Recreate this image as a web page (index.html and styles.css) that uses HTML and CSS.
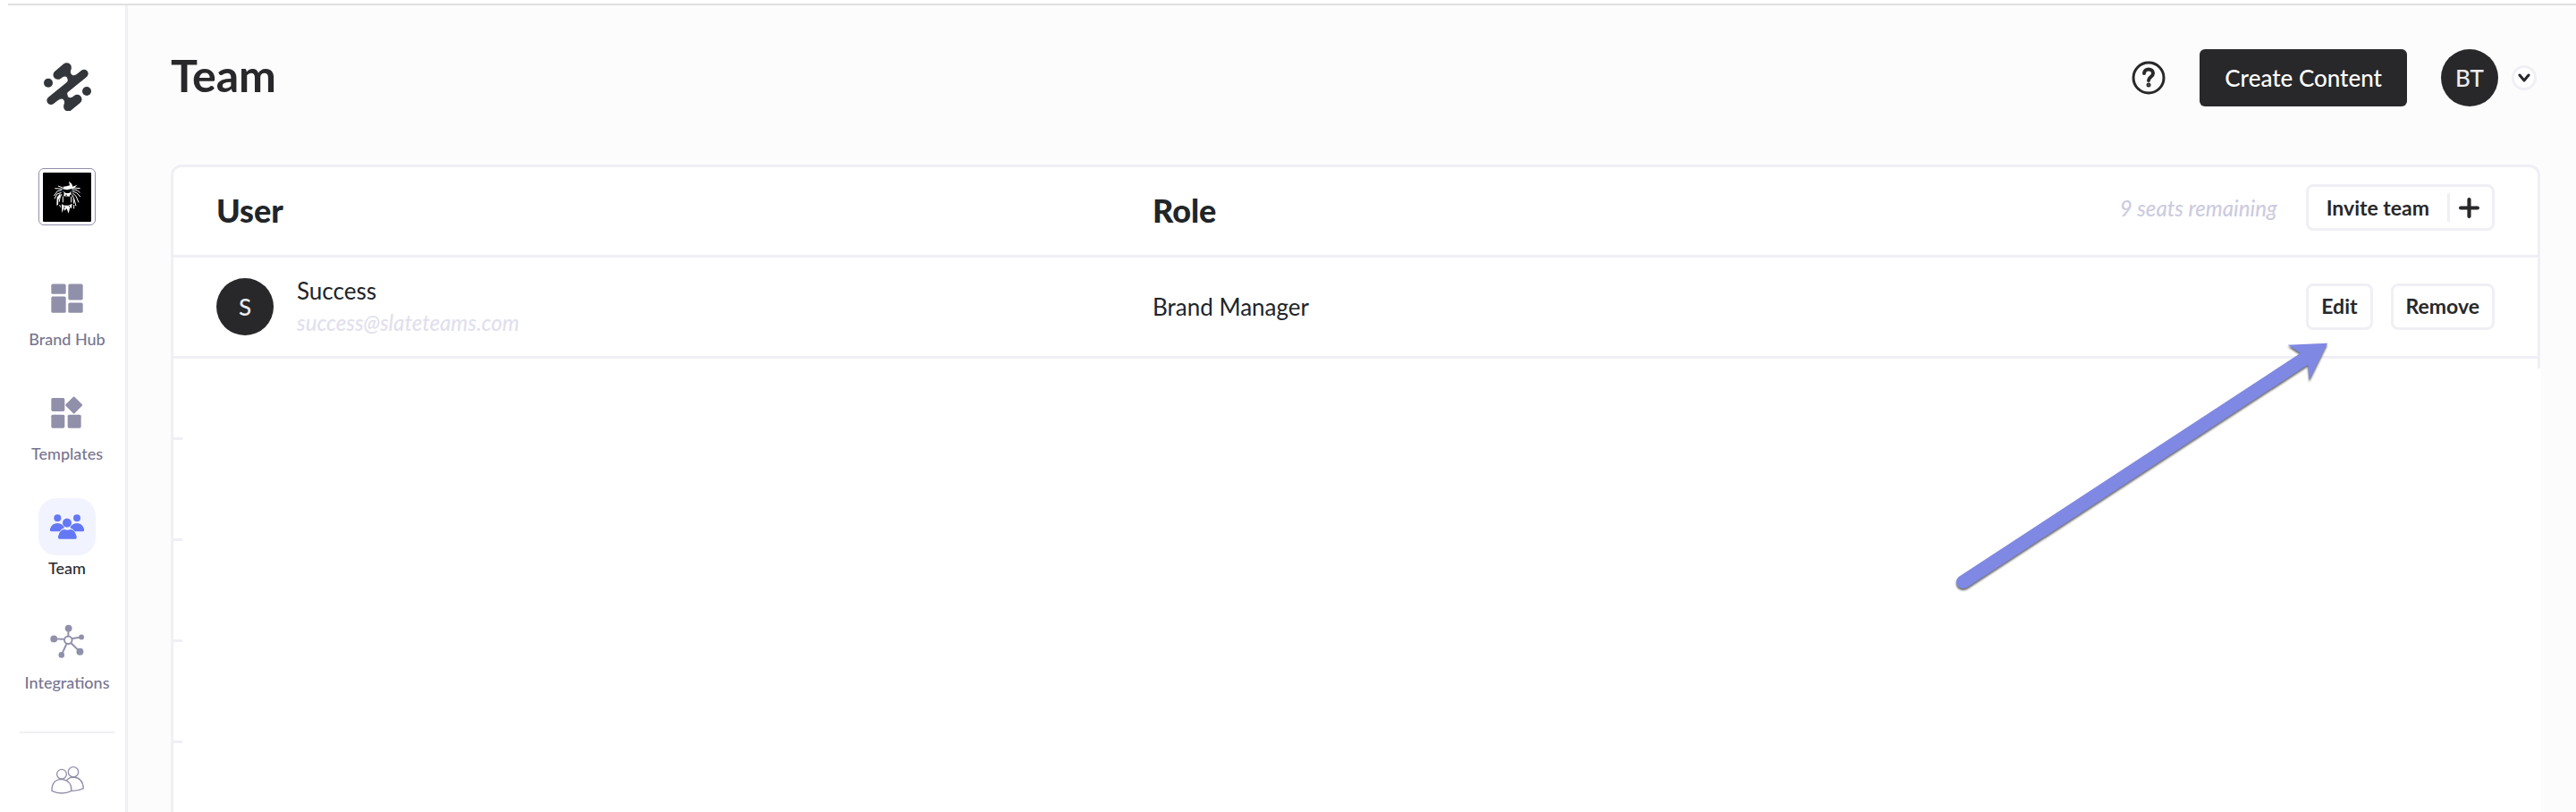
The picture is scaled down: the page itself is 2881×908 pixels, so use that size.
FILE: index.html
```
<!DOCTYPE html>
<html lang="en">
<head>
    <meta charset="UTF-8">
    <meta name="viewport" content="width=device-width, initial-scale=1.0">
    <title>Team</title>
    <link rel="stylesheet" href="styles.css">
</head>
<body>

<div class="top-strip"></div>

<div class="app">
    <!-- Sidebar -->
    <aside class="sidebar">
        <a href="#" class="logo" aria-label="Home">
            <svg width="53" height="54" viewBox="144 210 159 162">
                <g stroke="#33363b" stroke-linecap="round" fill="none">
                    <path stroke-width="28" d="M279 247L168 337"/>
                    <path stroke-width="31" d="M221 226L191 251M226 358L256 333"/>
                </g>
                <g fill="#33363b">
                    <path d="M237 228Q229 246 240 252Q247 255 258 245L212 292Q230 275 222 260Q215 250 196 266Z"/>
                    <path d="M210 356Q218 338 207 332Q200 329 189 339L235 292Q217 309 225 324Q232 334 251 318Z"/>
                    <circle cx="159" cy="278" r="15"/>
                    <circle cx="288" cy="306" r="15"/>
                </g>
            </svg>
        </a>

        <button class="brand-switch" aria-label="Switch brand">
            <svg width="54" height="55" viewBox="141 576 162 165">
                <rect x="141" y="576" width="162" height="165" rx="3" fill="#000"/>
                <g fill="#fff">
                    <path d="M228 605L238 614L241 623L256 617L248 626L238 630L222 634L206 631L212 626L208 623L220 622L231 619Z"/>
                    <path d="M211 640L218 645L229 645L235 640L236 650L231 650L231 656L210 655L212 649Z"/>
                    <path d="M204 681L212 686L227 686L239 680L237 697L232 692L227 713L221 697L213 704L212 694L205 711Z"/>
                    <path d="M199 646L188 659L187 686L192 684L193 667L200 655Z"/>
                </g>
                <g fill="none" stroke="#fff" stroke-width="3">
                    <path d="M210 628L192 621M206 631L181 629M204 635L190 638L178 654M203 643L188 648L180 664M204 648L198 660L196 674M208 656V676"/>
                    <path d="M240 627L266 629M238 632L256 635L265 644M240 638L254 644L267 657M240 644L252 655L261 676M239 650L246 666L252 688M236 656V676M243 664L245 680"/>
                    <path d="M245 684V697M197 684L200 692"/>
                </g>
                <path d="M213 660H230V670H213ZM216 676H229V683H216ZM217 650H222V653H217ZM211 690H215V694H211ZM228 688H231V691H228Z" fill="#000"/>
                <path d="M206 636L215 640L207 641ZM232 640L239 635L238 641Z" fill="#21738a"/>
            </svg>
        </button>

        <nav class="side-nav">
            <a href="#" class="nav-item">
                <span class="nav-icon">
                    <svg width="36" height="33" viewBox="172 80 108 98" fill="#9190ab">
                        <rect x="173" y="81" width="49" height="34" rx="5"/>
                        <rect x="173" y="123" width="49" height="55" rx="5"/>
                        <rect x="230" y="81" width="49" height="54" rx="5"/>
                        <rect x="230" y="144" width="49" height="34" rx="5"/>
                    </svg>
                </span>
                <span>Brand Hub</span>
            </a>
            <a href="#" class="nav-item">
                <span class="nav-icon">
                    <svg width="36" height="36" viewBox="172 460 108 108" fill="#9190ab">
                        <rect x="173" y="466" width="45" height="45" rx="5"/>
                        <rect x="173" y="522" width="45" height="45" rx="5"/>
                        <rect x="228" y="522" width="45" height="45" rx="5"/>
                        <rect x="228" y="469" width="42" height="42" rx="3" transform="rotate(45 249 490)"/>
                    </svg>
                </span>
                <span>Templates</span>
            </a>
            <a href="#" class="nav-item active">
                <span class="nav-icon">
                    <svg width="38" height="28" viewBox="168 134 114 84" fill="#6478f6">
                        <circle cx="193" cy="147" r="12"/>
                        <circle cx="258" cy="147" r="12"/>
                        <circle cx="225" cy="163" r="15"/>
                        <path d="M168 183Q175 164 193 164Q210 165 216 180Q206 183 200 192H172Q168 192 168 188Z"/>
                        <path d="M282 183Q275 164 258 164Q241 165 235 180Q245 183 251 192H278Q282 192 282 188Z"/>
                        <path d="M195 208Q201 185 216 185Q226 189 236 185Q251 186 257 208V213Q257 217 253 217H199Q195 217 195 213Z"/>
                    </svg>
                </span>
                <span>Team</span>
            </a>
            <a href="#" class="nav-item">
                <span class="nav-icon">
                    <svg width="38" height="38" viewBox="168 503 114 116">
                        <g stroke="#9190ab" stroke-width="6" fill="none">
                            <circle cx="229" cy="557" r="13"/>
                            <path d="M230 517L229 543M180 553L215 554M274 547L243 552M269 597L239 568M206 608L223 571"/>
                        </g>
                        <g fill="#9190ab">
                            <circle cx="230" cy="517" r="12"/>
                            <circle cx="180" cy="553" r="12"/>
                            <circle cx="274" cy="547" r="9"/>
                            <circle cx="269" cy="597" r="12"/>
                            <circle cx="206" cy="608" r="10"/>
                        </g>
                    </svg>
                </span>
                <span>Integrations</span>
            </a>
        </nav>

        <hr class="side-line">

        <a href="#" class="nav-icon" aria-label="Members">
            <svg width="37" height="31" viewBox="170 978 111 93" fill="none" stroke="#9190ab" stroke-width="4">
                <circle cx="206" cy="1004" r="16"/>
                <circle cx="245" cy="997" r="17"/>
                <path d="M173 1060Q172 1022 206 1021Q239 1024 239 1060Q206 1076 173 1060Z"/>
                <path d="M222 1025Q232 1014 245 1014Q277 1016 279 1052Q260 1061 239 1060"/>
            </svg>
        </a>
    </aside>

    <!-- Main content -->
    <main class="main">
        <header class="page-header">
            <h1>Team</h1>
            <div class="header-actions">
                <button class="help-btn" aria-label="Help">
                    <svg width="38" height="38" viewBox="0 0 38 38" fill="none" stroke="#28282a" stroke-linecap="round">
                        <circle cx="19" cy="19" r="17" stroke-width="3"/>
                        <path stroke-width="4" d="M14 14C14 8 24 8 24 14C24 18 19 18 19 22"/>
                        <circle cx="19" cy="27" r="1" stroke-width="3"/>
                    </svg>
                </button>
                <button class="create-btn">Create Content</button>
                <div class="account">
                    <span class="avatar">BT</span>
                    <button class="account-toggle" aria-label="Account menu">
                        <svg width="14" height="10" viewBox="0 0 14 10" fill="none" stroke="#28282a" stroke-width="3" stroke-linecap="round" stroke-linejoin="round">
                            <path d="M2 2L7 8L12 2"/>
                        </svg>
                    </button>
                </div>
            </div>
        </header>

        <section class="panel">
            <table class="team-table">
                <thead>
                    <tr>
                        <th class="user-col">User</th>
                        <th class="role-col">Role</th>
                        <th class="actions-col">
                            <div class="row-actions invite-actions">
                                <span class="seats">9 seats remaining</span>
                                <button class="outline-btn invite-btn">
                                    <span>Invite team</span>
                                    <span class="invite-plus">
                                        <svg width="23" height="23" viewBox="0 0 22 22" stroke="#28282a" stroke-width="4" stroke-linecap="round">
                                            <path d="M11 2V20M2 11H20"/>
                                        </svg>
                                    </span>
                                </button>
                            </div>
                        </th>
                    </tr>
                </thead>
                <tbody>
                    <tr>
                        <td>
                            <div class="user">
                                <span class="avatar">S</span>
                                <div>
                                    <div class="user-name">Success</div>
                                    <div class="user-email">success@slateteams.com</div>
                                </div>
                            </div>
                        </td>
                        <td class="role">Brand Manager</td>
                        <td>
                            <div class="row-actions">
                                <button class="outline-btn">Edit</button>
                                <button class="outline-btn">Remove</button>
                            </div>
                        </td>
                    </tr>
                </tbody>
            </table>
            <div class="blank-row short"></div>
            <div class="blank-row"></div>
            <div class="blank-row"></div>
            <div class="blank-row"></div>

            <div class="cover"></div>

            <!-- Arrow to the Edit button -->
            <svg class="arrow" width="480" height="300" viewBox="0 0 1440 900">
                <path fill="#7f88e3" d="M92 825L1238 75L1196 47L1329 41L1268 166L1263 114L120 861C96 873 70 848 92 825Z"/>
            </svg>
        </section>
    </main>
</div>

</body>
</html>
```

FILE: styles.css
```
* {
    box-sizing: border-box;
}

body {
    margin: 0;
    height: 100vh;
    overflow: hidden;
    display: flex;
    flex-direction: column;
    font-family: Lato, 'Open Sans', sans-serif;
    color: #212529;
    background: #fff;
}

button {
    font-family: inherit;
    padding: 0;
    border: none;
    background: none;
    cursor: pointer;
}

svg {
    display: block;
    flex-shrink: 0;
}

.top-strip {
    flex-shrink: 0;
    height: 6px;
    margin-left: 9px;
    border-bottom: 2px solid #e0e0e0;
}

.app {
    flex: 1;
    min-height: 0;
    display: flex;
}

/* Sidebar */
.sidebar {
    flex-shrink: 0;
    width: 143px;
    padding: 64px 0 0 10px;
    border-right: 3px solid #f0eff5;
    display: flex;
    flex-direction: column;
    align-items: center;
}

.brand-switch {
    width: 64px;
    height: 64px;
    margin: 64px 0 49px;
    border: 1px solid #9190ab;
    border-radius: 6px;
    display: flex;
    align-items: center;
    justify-content: center;
}

.side-nav {
    display: flex;
    flex-direction: column;
    align-items: center;
    gap: 36px;
}

.nav-item {
    display: flex;
    flex-direction: column;
    align-items: center;
    font-size: 18px;
    line-height: 28px;
    font-weight: 500;
    color: #77758f;
    text-decoration: none;
}

.nav-icon {
    width: 64px;
    height: 64px;
    border-radius: 20px;
    display: flex;
    align-items: center;
    justify-content: center;
}

.nav-item.active {
    color: #28282a;
}

.nav-item.active .nav-icon {
    background: #f1f4fe;
}

.side-line {
    width: 106px;
    margin: 41px 0 20px;
    border: none;
    border-top: 2px solid #f0eff5;
}

/* Main content */
.main {
    flex: 1;
    min-width: 0;
    padding: 49px 40px 0 48px;
    background: #fcfcfc;
    display: flex;
    flex-direction: column;
}

.page-header {
    display: flex;
    justify-content: space-between;
    padding-right: 4px;
    margin-bottom: 65px;
}

.page-header h1 {
    margin: 0;
    font-size: 50px;
    line-height: 58px;
    color: #28282a;
}

.header-actions {
    display: flex;
    align-items: center;
    gap: 38px;
}

.create-btn {
    height: 64px;
    padding: 0 28px;
    border-radius: 6px;
    background: #28282a;
    color: #fff;
    font-size: 26px;
    font-weight: 500;
}

.account {
    display: flex;
    align-items: center;
    gap: 15px;
}

.avatar {
    flex-shrink: 0;
    width: 64px;
    height: 64px;
    border-radius: 50%;
    background: #28282a;
    color: #ececf0;
    font-size: 26px;
    font-weight: 500;
    display: flex;
    align-items: center;
    justify-content: center;
}

.account-toggle {
    width: 28px;
    height: 28px;
    border: 3px solid #f0eff5;
    border-radius: 50%;
    background: #fff;
    display: flex;
    align-items: center;
    justify-content: center;
}

/* Team table */
.panel {
    position: relative;
    flex: 1;
    border: 3px solid #f0eff5;
    border-bottom: none;
    border-radius: 12px 12px 0 0;
    background: #fff;
}

.team-table {
    width: 100%;
    table-layout: fixed;
    border-collapse: separate;
    border-spacing: 0;
}

.team-table th,
.team-table td {
    padding: 0 0 0 48px;
    text-align: left;
    border-bottom: 3px solid #f0eff5;
}

.team-table th {
    height: 101px;
    padding-bottom: 2px;
    font-size: 36px;
    font-weight: 900;
}

.team-table td {
    height: 113px;
}

.user-col {
    width: 39.6%;
}

.role-col {
    width: 30%;
}

.user {
    display: flex;
    align-items: center;
    gap: 26px;
}

.user-name,
.role {
    font-size: 26px;
    line-height: 36px;
}

.user-email {
    font-size: 24px;
    line-height: 36px;
    font-weight: 500;
    font-style: italic;
    color: #e1e0ed;
}

.row-actions {
    display: flex;
    align-items: center;
    justify-content: flex-end;
    gap: 20px;
    padding-right: 48px;
}

.invite-actions {
    gap: 32px;
    padding-bottom: 6px;
}

.seats {
    font-size: 24px;
    font-weight: 500;
    font-style: italic;
    color: #cccbe0;
}

.outline-btn {
    height: 52px;
    padding: 0 14px 2px;
    border: 3px solid #f0eff5;
    border-radius: 8px;
    background: #fff;
    color: #28282a;
    font-size: 23px;
    font-weight: 700;
}

.invite-btn {
    padding: 0 14px 0 20px;
    display: flex;
    align-items: center;
    gap: 20px;
}

.invite-plus {
    height: 32px;
    padding-left: 10px;
    border-left: 3px solid #f0eff5;
    display: flex;
    align-items: center;
}

.blank-row {
    height: 113px;
    border-bottom: 3px solid #f0eff5;
}

.blank-row.short {
    height: 91px;
}

/* Hides the rows below the first user */
.cover {
    position: absolute;
    top: 225px;
    right: -4px;
    bottom: 0;
    left: 10px;
    background: #fff;
}

.arrow {
    position: absolute;
    top: 183px;
    right: 198px;
    pointer-events: none;
    filter: drop-shadow(0 2px 1px rgba(0, 0, 0, 0.6));
}
```
